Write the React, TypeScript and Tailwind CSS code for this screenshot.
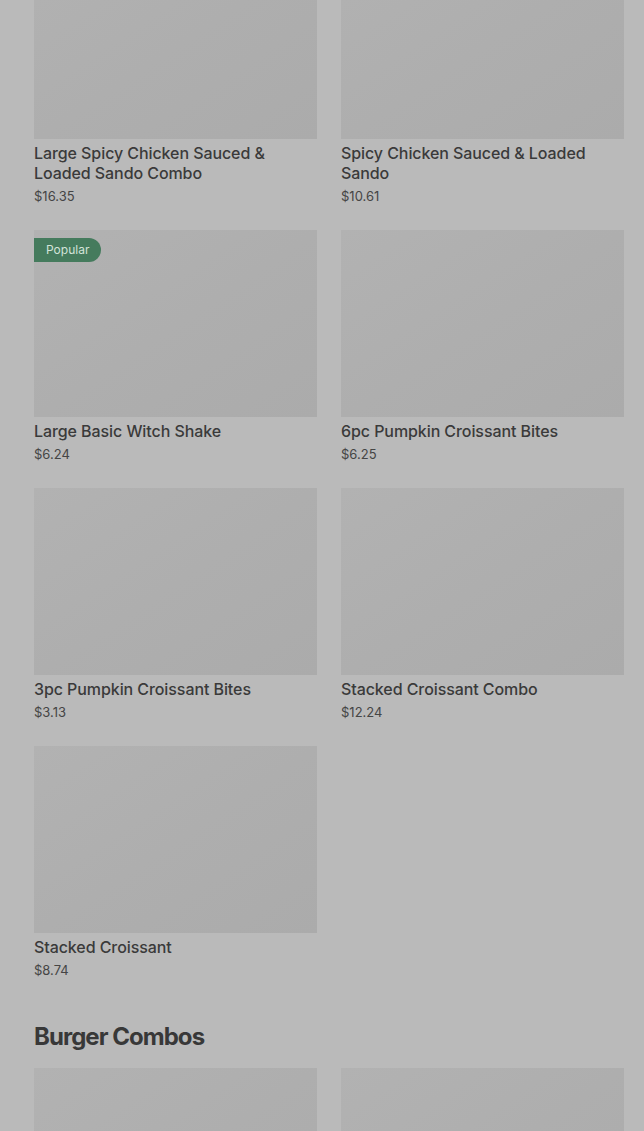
import * as React from 'react';

type Item = { name: string; price: string; popular?: boolean };

const items: Item[] = [
    { name: 'Large Spicy Chicken Sauced & Loaded Sando Combo', price: '$16.35' },
    { name: 'Spicy Chicken Sauced & Loaded Sando', price: '$10.61' },
    { name: 'Large Basic Witch Shake', price: '$6.24', popular: true },
    { name: '6pc Pumpkin Croissant Bites', price: '$6.25' },
    { name: '3pc Pumpkin Croissant Bites', price: '$3.13' },
    { name: 'Stacked Croissant Combo', price: '$12.24' },
    { name: 'Stacked Croissant', price: '$8.74' },
];

function Placeholder({ className = '' }: { className?: string }) {
    return <div className={`w-full bg-gradient-to-br from-[#b2b2b2] via-[#aeaeae] to-[#ababab] ${className}`} />;
}

function MenuCard({ item }: { item: Item }) {
    return (
        <div className="flex flex-col">
            <div className="relative">
                <Placeholder className="h-[187px]" />
                {item.popular && (
                    <span className="absolute left-0 top-[8px] h-[24px] px-[12px] flex items-center rounded-r-full bg-[#457b5d] text-[12px] text-[#d3e3d9]">
                        Popular
                    </span>
                )}
            </div>
            <h3 className="mt-[4px] text-[16px] leading-[20px] font-medium tracking-[-0.005em] text-[#3a3a3a] pr-4">{item.name}</h3>
            <p className="mt-[5px] text-[13px] leading-[16px] text-[#454545]">{item.price}</p>
        </div>
    );
}

export default function App() {
    return (
        <div className="min-h-screen w-full overflow-hidden bg-[#bababa]" style={{ fontFamily: "Inter, 'Liberation Sans', sans-serif" }}>
            <div className="-mt-[48px] pl-[34px] pr-[20px]">
                <div className="grid grid-cols-2 gap-x-[24px] gap-y-[26px]">
                    {items.map((item) => (
                        <MenuCard key={item.name} item={item} />
                    ))}
                </div>

                {/* Next section */}
                <h2 className="mt-[43px] text-[24px] leading-[32px] font-bold tracking-[-0.04em] text-[#383838]">Burger Combos</h2>
                <div className="mt-[15px] grid grid-cols-2 gap-x-[24px]">
                    <Placeholder className="h-[187px]" />
                    <Placeholder className="h-[187px]" />
                </div>
            </div>
        </div>
    );
}
